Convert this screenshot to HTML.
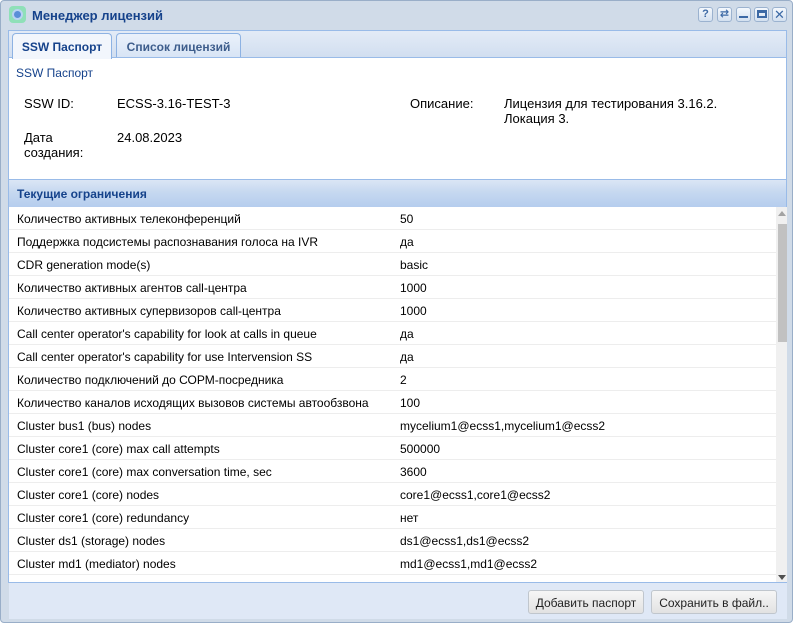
<!DOCTYPE html>
<html><head><meta charset="utf-8"><style>
*{margin:0;padding:0;box-sizing:border-box}
body{width:793px;height:623px;overflow:hidden;background:#fff;font-family:"Liberation Sans","DejaVu Sans",sans-serif;font-size:12px;color:#000;position:relative}
.win{position:absolute;left:0;top:0;width:793px;height:623px;background:#d0dbe8;border:1px solid #99aec8;border-radius:4px}
.abs{position:absolute}
.title{left:32px;top:8px;font-weight:bold;font-size:13px;color:#15428b}
.tb{position:absolute;top:7px;width:15px;height:15px;border:1px solid #9bb2cf;border-radius:3px;background:linear-gradient(#f4f8fd,#d3e0f0);color:#3c69a5;font-size:11px;font-weight:bold;text-align:center;line-height:13px}
.tabbar{left:8px;top:30px;width:779px;height:28px;background:linear-gradient(#e3ebf6,#d1def0);border:1px solid #99bbe8;border-bottom:none}
.tab{position:absolute;top:33px;height:25px;border:1px solid #8db2e3;border-bottom:none;border-radius:4px 4px 0 0;font-weight:bold;color:#15428b;padding:6px 0 0;text-align:center}
.panel{left:8px;top:57px;width:779px;height:526px;background:#fff;border:1px solid #99bbe8}
.sec{left:9px;top:179px;width:777px;height:28px;background:linear-gradient(#dbe6f5 0%,#c6d8f0 45%,#b5cdee 100%);border-top:1px solid #99bbe8;font-weight:bold;color:#15428b;padding:7px 0 0 8px}
.row{position:absolute;left:0;width:767px;height:23px;border-bottom:1px solid #ededed}
.row span{position:absolute;top:5px}
.row .a{left:8px}.row .b{left:391px}
.bottom{left:9px;top:582px;width:778px;height:37px;background:#dfe8f6;border-top:1px solid #99bbe8}
.btn{position:absolute;top:590px;height:24px;border:1px solid #c0c6cd;border-radius:3px;background:linear-gradient(#f6f6f6,#e2e2e2);text-align:center;padding-top:5px;color:#222}
</style></head><body>
<div class="win"></div>
<div class="abs" style="left:9px;top:6px;width:17px;height:17px;border-radius:4px;background:#8fe0b8"></div>
<div class="abs" style="left:12px;top:9px;width:11px;height:11px;border-radius:50%;background:#5a8fd8;border:2px solid #b9d3f3"></div>
<div class="abs title">Менеджер лицензий</div>
<div class="tb" style="left:698px">?</div>
<div class="tb" style="left:717px">⇄</div>
<div class="tb" style="left:736px"><div style="width:9px;height:2px;background:#3c69a5;margin:8px auto 0"></div></div>
<div class="tb" style="left:754px"><div style="width:10px;height:8px;border:2px solid #3c69a5;border-top-width:3px;margin:2px auto 0"></div></div>
<div class="tb" style="left:772px;font-weight:normal;font-size:13px">✕</div>
<div class="abs tabbar"></div>
<div class="tab" style="left:12px;width:100px;background:#f2f6fc;border-color:#8db2e3;height:26px;z-index:2">SSW Паспорт</div>
<div class="tab" style="left:116px;width:125px;background:linear-gradient(#eaf1fb,#d7e4f5);color:#3d5d8c">Список лицензий</div>
<div class="abs panel"></div>
<div class="abs" style="left:16px;top:66px;color:#15428b">SSW Паспорт</div>
<div class="abs" style="left:24px;top:96px;font-size:13px">SSW ID:</div>
<div class="abs" style="left:117px;top:96px;font-size:13px">ECSS-3.16-TEST-3</div>
<div class="abs" style="left:410px;top:96px;font-size:13px">Описание:</div>
<div class="abs" style="left:504px;top:96px;font-size:13px;line-height:15px">Лицензия для тестирования 3.16.2.<br>Локация 3.</div>
<div class="abs" style="left:24px;top:130px;font-size:13px;line-height:15px">Дата<br>создания:</div>
<div class="abs" style="left:117px;top:130px;font-size:13px">24.08.2023</div>
<div class="abs sec">Текущие ограничения</div>
<div class="abs" style="left:9px;top:207px;width:767px;height:375px;overflow:hidden">
<div style="position:relative;top:-207px">
<div class="row" style="top:207px"><span class="a">Количество активных телеконференций</span><span class="b">50</span></div>
<div class="row" style="top:230px"><span class="a">Поддержка подсистемы распознавания голоса на IVR</span><span class="b">да</span></div>
<div class="row" style="top:253px"><span class="a">CDR generation mode(s)</span><span class="b">basic</span></div>
<div class="row" style="top:276px"><span class="a">Количество активных агентов call-центра</span><span class="b">1000</span></div>
<div class="row" style="top:299px"><span class="a">Количество активных супервизоров call-центра</span><span class="b">1000</span></div>
<div class="row" style="top:322px"><span class="a">Call center operator's capability for look at calls in queue</span><span class="b">да</span></div>
<div class="row" style="top:345px"><span class="a">Call center operator's capability for use Intervension SS</span><span class="b">да</span></div>
<div class="row" style="top:368px"><span class="a">Количество подключений до СОРМ-посредника</span><span class="b">2</span></div>
<div class="row" style="top:391px"><span class="a">Количество каналов исходящих вызовов системы автообзвона</span><span class="b">100</span></div>
<div class="row" style="top:414px"><span class="a">Cluster bus1 (bus) nodes</span><span class="b">mycelium1@ecss1,mycelium1@ecss2</span></div>
<div class="row" style="top:437px"><span class="a">Cluster core1 (core) max call attempts</span><span class="b">500000</span></div>
<div class="row" style="top:460px"><span class="a">Cluster core1 (core) max conversation time, sec</span><span class="b">3600</span></div>
<div class="row" style="top:483px"><span class="a">Cluster core1 (core) nodes</span><span class="b">core1@ecss1,core1@ecss2</span></div>
<div class="row" style="top:506px"><span class="a">Cluster core1 (core) redundancy</span><span class="b">нет</span></div>
<div class="row" style="top:529px"><span class="a">Cluster ds1 (storage) nodes</span><span class="b">ds1@ecss1,ds1@ecss2</span></div>
<div class="row" style="top:552px"><span class="a">Cluster md1 (mediator) nodes</span><span class="b">md1@ecss1,md1@ecss2</span></div>
<div class="row" style="top:575px"><span class="a">Cluster sip1 (sip) nodes</span><span class="b">sip1@ecss1,sip1@ecss2</span></div>
</div></div>
<div class="abs" style="left:776px;top:207px;width:11px;height:375px;background:#f0f0f0"></div>
<div class="abs" style="left:778px;top:224px;width:9px;height:118px;background:#c1c1c1"></div>
<div class="abs" style="left:778px;top:211px;width:0;height:0;border-left:4px solid transparent;border-right:4px solid transparent;border-bottom:5px solid #a3a3a3"></div>
<div class="abs" style="left:778px;top:575px;width:0;height:0;border-left:4px solid transparent;border-right:4px solid transparent;border-top:5px solid #505050"></div>
<div class="abs bottom"></div>
<div class="btn" style="left:528px;width:116px">Добавить паспорт</div>
<div class="btn" style="left:651px;width:126px">Сохранить в файл..</div>
</body></html>
